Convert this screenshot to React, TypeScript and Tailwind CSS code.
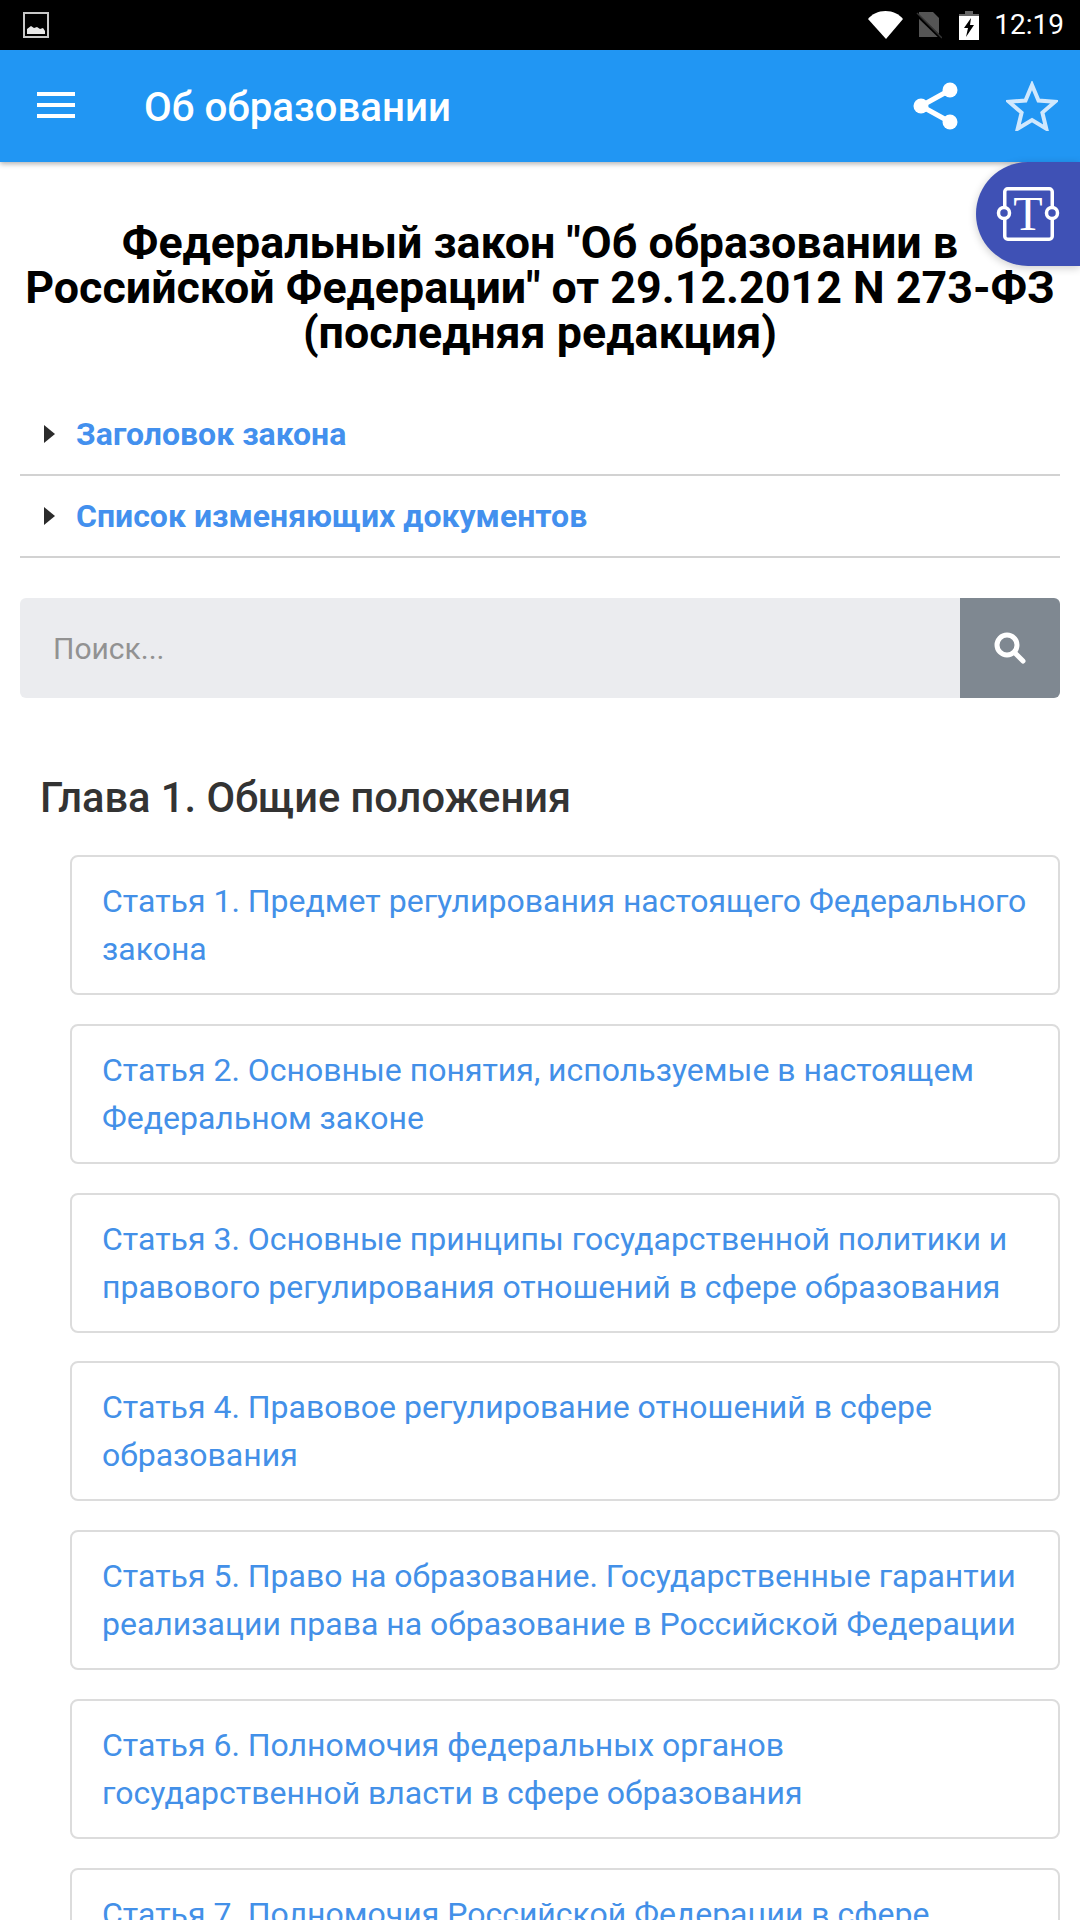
import React from 'react';

const articles = [
  'Статья 1. Предмет регулирования настоящего Федерального закона',
  'Статья 2. Основные понятия, используемые в настоящем Федеральном законе',
  'Статья 3. Основные принципы государственной политики и правового регулирования отношений в сфере образования',
  'Статья 4. Правовое регулирование отношений в сфере образования',
  'Статья 5. Право на образование. Государственные гарантии реализации права на образование в Российской Федерации',
  'Статья 6. Полномочия федеральных органов государственной власти в сфере образования',
  'Статья 7. Полномочия Российской Федерации в сфере образования, переданные для осуществления',
];

function StatusBar() {
  return (
    <div className="h-[50px] bg-black flex items-center justify-between pl-[23px] pr-[16px] shrink-0">
      <svg width="26" height="26" viewBox="0 0 26 26">
        <rect x="1" y="1" width="24" height="24" fill="none" stroke="#c8c8c8" strokeWidth="2" />
        <path d="M4 22v-5l4-3 3 2 3-1 3 2 3-1 2 3v3z" fill="#e8e8e8" />
      </svg>
      <div className="flex items-center">
        <svg width="35" height="28" viewBox="0 0 35 28" className="mr-[9px]">
          <path d="M0 8C4 3 10 0 17.500 0S31 3 35 8L18 28z" fill="#fff" />
        </svg>
        <svg width="30" height="30" viewBox="0 0 30 30" className="mr-[17px]">
          <path d="M7 2h14l6 6v19H7z" fill="#555" />
          <path d="M4 4l26 25" stroke="#000" strokeWidth="3" />
          <path d="M5 3l25 25" stroke="#333" strokeWidth="1.5" />
        </svg>
        <svg width="20" height="29" viewBox="0 0 20 29" className="mr-[15px]">
          <path d="M6 0h8v3h6v26H0V3h6z" fill="#fff" />
          <path d="M6 0h8v3h6v2H0V3h6z" fill="#666" />
          <path d="M12 7l-7 10h4l-2 9 8-12h-4z" fill="#000" />
        </svg>
        <span className="text-[28px] leading-[50px] text-white">12:19</span>
      </div>
    </div>
  );
}

function AppBar() {
  return (
    <header className="h-[112px] bg-[#2196f3] flex items-center shrink-0 shadow-[0_2px_5px_rgba(0,0,0,0.3)] relative z-10">
      <div className="w-[38px] ml-[37px] mr-[69px] flex flex-col gap-[7px] -mt-[2px]">
        <div className="h-[4px] bg-white" />
        <div className="h-[4px] bg-white" />
        <div className="h-[4px] bg-white" />
      </div>
      <h1 className="text-[40.3px] font-medium text-white flex-1 pt-[4px]">Об образовании</h1>
      <svg width="46" height="48" viewBox="0 0 46 48" className="mr-[47px]">
        <path d="M37 8L8 24l29 16" fill="none" stroke="#fff" strokeWidth="5" />
        <circle cx="37" cy="8" r="7.5" fill="#fff" />
        <circle cx="8" cy="24" r="7.5" fill="#fff" />
        <circle cx="37" cy="40" r="7.5" fill="#fff" />
      </svg>
      <svg width="52" height="50" viewBox="0 0 52 50" className="mr-[22px]">
        <path d="M26 4l6.500 15.500 16.500 1.300-12.600 10.800 3.900 16.100L26 39l-14.300 8.700 3.900-16.100L3 20.800l16.500-1.300z" fill="none" stroke="#d0e8fd" strokeWidth="4" />
      </svg>
    </header>
  );
}

function FloatingButton() {
  return (
    <div className="absolute right-0 top-[162px] w-[104px] h-[104px] bg-[#3f51b5] rounded-l-[52px] flex items-center justify-center shadow-[0_2px_8px_rgba(0,0,0,0.2)] z-20">
      <svg width="64" height="56" viewBox="0 0 64 56">
        <rect x="8.75" y="2.75" width="47.5" height="50.5" rx="3" fill="none" stroke="#fff" strokeWidth="3.5" />
        <text x="32" y="44" textAnchor="middle" fontSize="48" fill="#fff" fontFamily="'Liberation Serif', serif">T</text>
        <circle cx="8" cy="27" r="5.5" fill="#3f51b5" stroke="#fff" strokeWidth="3.5" />
        <circle cx="56" cy="27" r="5.5" fill="#3f51b5" stroke="#fff" strokeWidth="3.5" />
      </svg>
    </div>
  );
}

function Row({ label }: { label: string }) {
  return (
    <div className="h-[82px] border-b-2 border-[#d2d2d2] flex items-center pl-[24px]">
      <div className="w-0 h-0 border-y-[9px] border-y-transparent border-l-[11px] border-l-[#2b2b2b] mr-[21px]" />
      <span className="text-[32px] font-bold text-[#4390ee]">{label}</span>
    </div>
  );
}

export default function App() {
  return (
    <div className="w-[1080px] h-[1920px] overflow-hidden bg-white relative flex flex-col font-['Roboto',sans-serif]">
      <StatusBar />
      <AppBar />
      <FloatingButton />
      <main className="px-[20px]">
        <h2 className="mt-[58px] text-[44.8px] leading-[45px] font-bold text-black text-center">
          Федеральный закон "Об образовании в Российской Федерации" от 29.12.2012 N 273-ФЗ (последняя редакция)
        </h2>
        <div className="mt-[39px]">
          <Row label="Заголовок закона" />
          <Row label="Список изменяющих документов" />
        </div>
        <div className="mt-[40px] h-[100px] flex rounded-[6px] overflow-hidden">
          <div className="flex-1 bg-[#ebecef] flex items-center pl-[33px] text-[30px] text-[#929292]">Поиск...</div>
          <div className="w-[100px] bg-[#7f8891] flex items-center justify-center">
            <svg width="34" height="34" viewBox="0 0 34 34">
              <circle cx="14" cy="14" r="10" fill="none" stroke="#fff" strokeWidth="5" />
              <path d="M21.500 21.500L30 30" stroke="#fff" strokeWidth="5" strokeLinecap="round" />
            </svg>
          </div>
        </div>
        <h3 className="mt-[76px] ml-[20px] text-[41.6px] leading-[48px] font-medium text-[#333]">Глава 1. Общие положения</h3>
        <div className="ml-[50px] mt-[33px]">
          {articles.map((a) => (
            <div key={a} className="border-2 border-[#dcdcdc] rounded-[8px] px-[30px] py-[20px] mb-[28.75px] text-[32px] leading-[48px] text-[#4390e8]">
              {a}
            </div>
          ))}
        </div>
      </main>
    </div>
  );
}
